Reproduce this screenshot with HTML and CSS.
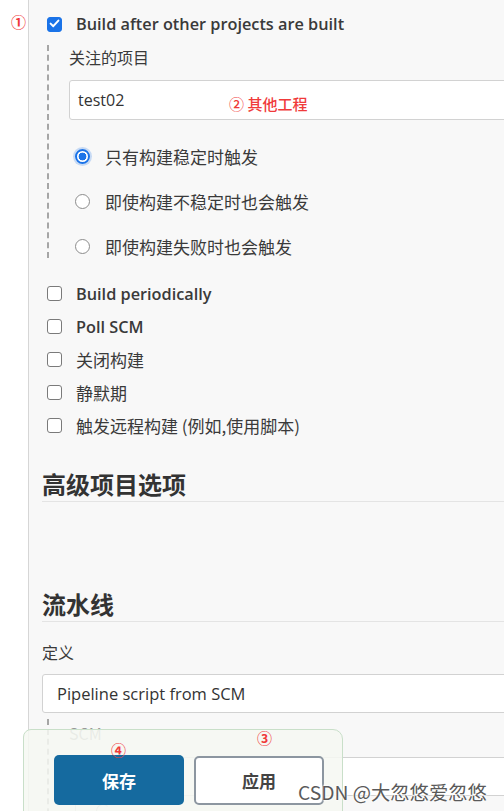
FILE: index.html
```html
<!DOCTYPE html>
<html lang="zh-CN">
<head>
<meta charset="utf-8">
<title>Jenkins 配置</title>
<link rel="stylesheet" href="styles.css">
</head>
<body>
<div class="page">
  <aside class="gutter"></aside>
  <main class="main">
    <section class="triggers">
      <div class="opt opt-main">
        <span class="box on"><svg viewBox="0 0 15 15" width="15" height="15"><path d="M3.6 7.6 L6.3 10.2 L11.4 4.6" fill="none" stroke="#fff" stroke-width="2" stroke-linecap="round" stroke-linejoin="round"/></svg></span>
        <span class="lbl en">Build after other projects are built</span>
      </div>
      <div class="nested">
        <div class="field-label">关注的项目</div>
        <div class="text-input">test02</div>
        <div class="radios">
          <div class="radio-row"><span class="radio on"></span><span class="lbl">只有构建稳定时触发</span></div>
          <div class="radio-row"><span class="radio"></span><span class="lbl">即使构建不稳定时也会触发</span></div>
          <div class="radio-row"><span class="radio"></span><span class="lbl">即使构建失败时也会触发</span></div>
        </div>
      </div>
      <div class="checks">
        <div class="opt"><span class="box"></span><span class="lbl en">Build periodically</span></div>
        <div class="opt"><span class="box"></span><span class="lbl en">Poll SCM</span></div>
        <div class="opt"><span class="box"></span><span class="lbl">关闭构建</span></div>
        <div class="opt"><span class="box"></span><span class="lbl">静默期</span></div>
        <div class="opt"><span class="box"></span><span class="lbl">触发远程构建 (例如,使用脚本)</span></div>
      </div>
    </section>

    <h2 class="section-title adv">高级项目选项</h2>
    <h2 class="section-title pipe">流水线</h2>

    <div class="field-label def">定义</div>
    <div class="select">Pipeline script from SCM</div>

    <div class="nested scm">
      <div class="field-label muted">SCM</div>
      <div class="select scm-select"></div>
      <div class="inner"><span class="arc"></span></div>
    </div>
  </main>
</div>

<div class="bottom-bar">
  <button class="btn save">保存</button>
  <button class="btn apply">应用</button>
</div>

<span class="mark m1">①</span>
<span class="mark m2">② 其他工程</span>
<span class="mark m3">③</span>
<span class="mark m4">④</span>

<div class="watermark">CSDN @大忽悠爱忽悠</div>
</body>
</html>
```

FILE: styles.css
```css
html, body {
  margin: 0;
  padding: 0;
}
body {
  position: relative;
  width: 504px;
  height: 811px;
  overflow: hidden;
  background: #fff;
  font-family: "Open Sans", "Noto Sans CJK SC", sans-serif;
  color: #333;
}

.page {
  display: flex;
  min-height: 811px;
}
.gutter {
  flex: none;
  width: 28px;
  background: #fff;
  border-right: 1px solid #d6d6d6;
}
.main {
  flex: 1;
  min-width: 0;
  background: #f8f8f8;
  padding: 9px 0 0 13px;
  overflow: hidden;
}

/* trigger options */
.triggers {
  padding-left: 5px;
}
.opt {
  display: flex;
  align-items: center;
  gap: 14px;
  height: 33px;
}
.opt-main {
  height: 30px;
}
.lbl {
  font-size: 17px;
  font-family: "Noto Sans CJK SC", sans-serif;
  color: #3a3a3a;
  white-space: nowrap;
}
.lbl.en {
  font-family: "Open Sans", "Noto Sans CJK SC", sans-serif;
  font-weight: 600;
  font-size: 16.3px;
}
.box {
  flex: none;
  width: 15px;
  height: 15px;
  box-sizing: border-box;
  border: 1.5px solid #7a7a7a;
  border-radius: 3px;
  background: #fff;
  display: flex;
}
.box.on {
  background: #1a73e8;
  border-color: #1a73e8;
}
.box.on svg {
  margin: -1.5px;
}

.nested {
  margin-top: 6px;
  border-left: 2px dashed #a6a6a6;
  padding-left: 20px;
}
.field-label {
  font-family: "Noto Sans CJK SC", sans-serif;
  font-size: 16px;
  line-height: 24px;
  color: #3a3a3a;
}
.text-input {
  margin-top: 11px;
  margin-right: -40px;
  height: 40px;
  box-sizing: border-box;
  background: #fff;
  border: 1px solid #d2d2d2;
  border-radius: 3px;
  padding-left: 8px;
  display: flex;
  align-items: center;
  font-size: 16px;
  color: #333;
}
.radios {
  padding-top: 24px;
  display: flex;
  flex-direction: column;
  gap: 21px;
}
.radio-row {
  display: flex;
  align-items: center;
  gap: 15px;
  height: 24px;
  padding-left: 6px;
}
.radio {
  flex: none;
  width: 15px;
  height: 15px;
  box-sizing: border-box;
  border-radius: 50%;
  border: 1.5px solid #8c8c8c;
  background: #fff;
}
.radio.on {
  border: 2px solid #1a73e8;
  background: radial-gradient(circle, #1a73e8 0 3.6px, #fff 4.2px);
  box-shadow: 0 0 0 2px rgba(26, 115, 232, 0.22);
}

.checks {
  margin-top: 19px;
}

/* sections */
.section-title {
  margin: 0;
  font-family: "Noto Sans CJK SC", sans-serif;
  font-size: 24px;
  font-weight: 700;
  line-height: 30px;
  color: #333;
  padding-bottom: 2px;
  border-bottom: 1px solid #e4e4e4;
}
.section-title.adv {
  margin-top: 27px;
}
.section-title.pipe {
  margin-top: 87px;
}
.field-label.def {
  margin-top: 18px;
}
.select {
  margin-top: 10px;
  margin-right: -40px;
  height: 39px;
  box-sizing: border-box;
  background: #fff;
  border: 1px solid #d2d2d2;
  border-radius: 3px;
  padding-left: 14px;
  display: flex;
  align-items: center;
  font-size: 16.5px;
  color: #333;
}
.nested.scm {
  margin-left: 5px;
  padding-top: 2px;
}
.muted {
  color: #999;
}
.scm-select {
  margin-top: 12px;
}
.inner {
  margin-left: 6px;
  height: 30px;
  border-left: 1px solid #cfcfcf;
  padding: 8px 0 0 20px;
}
.arc {
  display: block;
  width: 14px;
  height: 14px;
  border-radius: 50%;
  border: 1.5px solid #bdbdbd;
  border-right-color: transparent;
  border-bottom-color: transparent;
  box-sizing: border-box;
}

/* bottom sticky bar */
.bottom-bar {
  position: absolute;
  left: 23px;
  top: 729px;
  width: 320px;
  height: 100px;
  box-sizing: border-box;
  background: rgba(246, 248, 242, 0.86);
  border: 1px solid #c9dfc9;
  border-radius: 8px 10px 0 0;
  padding: 25px 0 0 30px;
  display: flex;
  align-items: flex-start;
  gap: 10px;
}
.btn {
  font-family: "Noto Sans CJK SC", sans-serif;
  font-size: 17px;
  font-weight: 700;
  border-radius: 5px;
  box-sizing: border-box;
  padding: 0;
  cursor: pointer;
}
.btn.save {
  width: 130px;
  height: 50px;
  background: #156a9f;
  color: #fff;
  border: none;
}
.btn.apply {
  width: 130px;
  height: 49px;
  margin-top: 1px;
  background: #fff;
  color: #444;
  border: 2px solid #8c96a0;
}

/* annotations */
.mark {
  position: absolute;
  font-family: "Noto Sans CJK SC", sans-serif;
  color: #f03a3a;
  font-size: 15px;
  font-weight: 700;
  line-height: 16px;
  white-space: nowrap;
}
.m1 { left: 11px; top: 14px; }
.m2 { left: 229px; top: 96px; font-weight: 500; }
.m3 { left: 257px; top: 730px; }
.m4 { left: 111px; top: 742px; }

.watermark {
  position: absolute;
  left: 298px;
  top: 779px;
  font-family: "Noto Sans CJK SC", sans-serif;
  font-size: 19.3px;
  line-height: 26px;
  color: #5a5a5a;
  white-space: nowrap;
  text-shadow: 0 0 2px #fff, 0 0 2px #fff, 0 0 3px #fff;
}
```
